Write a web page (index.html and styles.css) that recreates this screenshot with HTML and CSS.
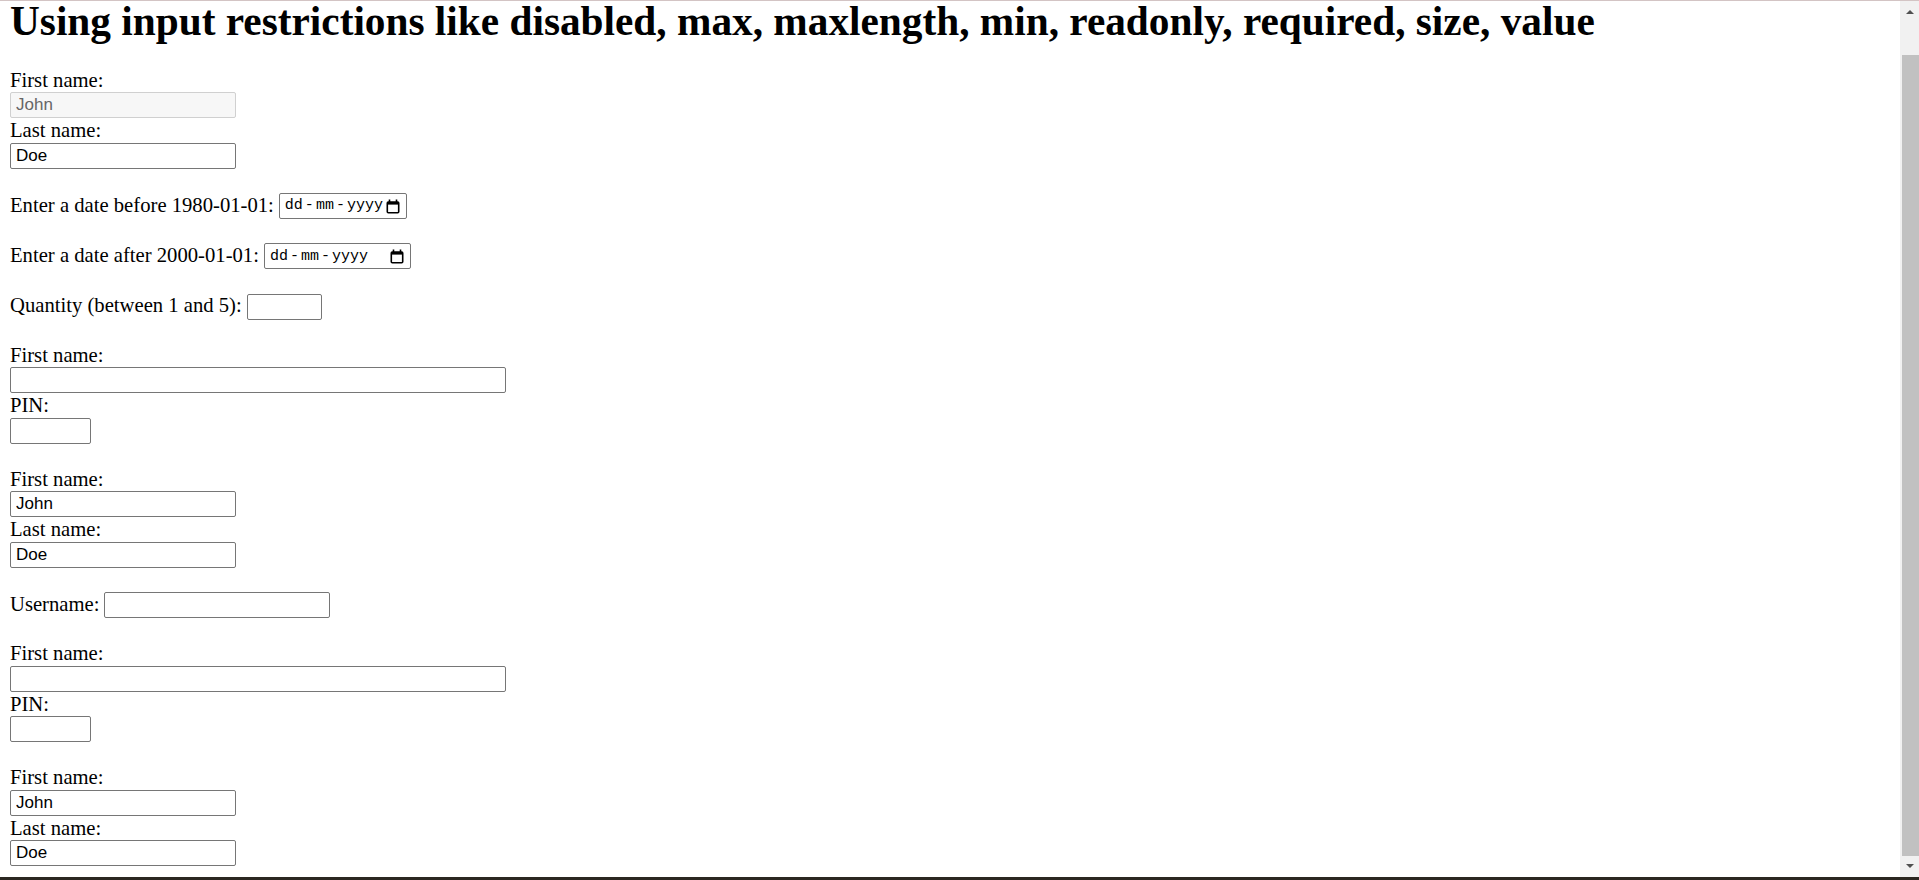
FILE: index.html
```html
<!DOCTYPE html>
<html lang="en">
<head>
<meta charset="utf-8">
<title>Input restrictions</title>
<link rel="stylesheet" href="styles.css">
</head>
<body>
<div class="window">
  <div class="viewport">
    <main class="page">
      <h1 class="title">Using input restrictions like disabled, max, maxlength, min, readonly, required, size, value</h1>

      <form class="group">
        <label class="label" for="d-first">First name:</label>
        <div class="field"><input class="input" id="d-first" type="text" value="John" disabled></div>
        <label class="label" for="d-last">Last name:</label>
        <div class="field"><input class="input" id="d-last" type="text" value="Doe"></div>
      </form>

      <form class="group">
        <div class="row">
          <label class="label">Enter a date before 1980-01-01:</label>
          <div class="date date-max">
            <span>dd</span><span class="sep">-</span><span>mm</span><span class="sep">-</span><span>yyyy</span>
            <svg class="cal" width="14" height="15" viewBox="0 0 14 15"><path d="M3.5 0.5v3M10.5 0.5v3" stroke="#000" stroke-width="1.6"/><rect x="1.3" y="3" width="11.4" height="10.7" rx="1" fill="none" stroke="#000" stroke-width="1.6"/><rect x="1.3" y="3" width="11.4" height="2.6" fill="#000"/></svg>
          </div>
        </div>
      </form>

      <form class="group">
        <div class="row">
          <label class="label">Enter a date after 2000-01-01:</label>
          <div class="date date-min">
            <span>dd</span><span class="sep">-</span><span>mm</span><span class="sep">-</span><span>yyyy</span>
            <svg class="cal" width="14" height="15" viewBox="0 0 14 15"><path d="M3.5 0.5v3M10.5 0.5v3" stroke="#000" stroke-width="1.6"/><rect x="1.3" y="3" width="11.4" height="10.7" rx="1" fill="none" stroke="#000" stroke-width="1.6"/><rect x="1.3" y="3" width="11.4" height="2.6" fill="#000"/></svg>
          </div>
        </div>
      </form>

      <form class="group">
        <div class="row">
          <label class="label" for="qty">Quantity (between 1 and 5):</label>
          <input class="input w-qty" id="qty" type="text">
        </div>
      </form>

      <form class="group">
        <label class="label" for="s-first">First name:</label>
        <div class="field"><input class="input w-long" id="s-first" type="text"></div>
        <label class="label" for="s-pin">PIN:</label>
        <div class="field"><input class="input w-pin" id="s-pin" type="text"></div>
      </form>

      <form class="group">
        <label class="label" for="r-first">First name:</label>
        <div class="field"><input class="input" id="r-first" type="text" value="John" readonly></div>
        <label class="label" for="r-last">Last name:</label>
        <div class="field"><input class="input" id="r-last" type="text" value="Doe"></div>
      </form>

      <form class="group">
        <div class="row">
          <label class="label" for="user">Username:</label>
          <input class="input" id="user" type="text">
        </div>
      </form>

      <form class="group">
        <label class="label" for="z-first">First name:</label>
        <div class="field"><input class="input w-long" id="z-first" type="text"></div>
        <label class="label" for="z-pin">PIN:</label>
        <div class="field"><input class="input w-pin" id="z-pin" type="text"></div>
      </form>

      <form class="group">
        <label class="label" for="v-first">First name:</label>
        <div class="field"><input class="input" id="v-first" type="text" value="John"></div>
        <label class="label" for="v-last">Last name:</label>
        <div class="field"><input class="input" id="v-last" type="text" value="Doe"></div>
      </form>
    </main>
    <div class="scrollbar">
      <div class="sb-btn sb-up"><span class="arrow-up"></span></div>
      <div class="sb-track"><div class="sb-thumb"></div></div>
      <div class="sb-btn sb-down"><span class="arrow-down"></span></div>
    </div>
  </div>
  <div class="bottombar"></div>
</div>
</body>
</html>
```

FILE: styles.css
```css
html, body {
  margin: 0;
  padding: 0;
  background: #ffffff;
  overflow: hidden;
}

.window {
  height: 880px;
  display: flex;
  flex-direction: column;
  border-top: 1px solid #d3c4c4;
  box-sizing: border-box;
}

.viewport {
  flex: 1;
  min-height: 0;
  display: flex;
}

.page {
  flex: 1;
  min-width: 0;
  overflow: hidden;
  padding-left: 10px;
  font-family: "Liberation Serif", "Times New Roman", serif;
  font-size: 20.66px;
  line-height: 23.2px;
  color: #000;
}

.title {
  margin: 0 0 26.5px;
  font-size: 41.3px;
  line-height: 41.5px;
  font-weight: bold;
  white-space: nowrap;
}

.group {
  margin: 0 0 23.15px;
  display: flex;
  flex-direction: column;
  align-items: flex-start;
}

.label {
  display: block;
  height: 23.25px;
  white-space: nowrap;
}

.field {
  height: 27.2px;
}

.row {
  display: flex;
  align-items: flex-start;
  gap: 5px;
  height: 27.2px;
}

.row .label {
  margin-top: 0.5px;
}

.input {
  display: block;
  box-sizing: border-box;
  width: 226px;
  height: 26px;
  margin: 0;
  padding: 0 5px;
  border: 1px solid #767676;
  border-radius: 2px;
  background: #fff;
  color: #000;
  font-family: "Liberation Sans", Arial, sans-serif;
  font-size: 17px;
  outline: none;
}

.input:disabled {
  background: #f7f7f7;
  border-color: #d0d0d0;
  color: #666;
  -webkit-text-fill-color: #666;
  opacity: 1;
}

.w-long { width: 496px; }
.w-pin { width: 81px; }
.w-qty { width: 75px; }

.date {
  box-sizing: border-box;
  height: 26px;
  display: flex;
  align-items: center;
  padding: 0 6px 0 5px;
  border: 1px solid #767676;
  border-radius: 2px;
  font-family: "Liberation Mono", "Courier New", monospace;
  font-size: 15px;
  color: #000;
}

.date-max { width: 128px; }
.date-min { width: 147px; }

.date .sep {
  margin: 0 2px;
}

.date .cal {
  margin-left: auto;
  flex: none;
}

.scrollbar {
  width: 19px;
  flex: none;
  background: #f1f1f1;
  display: flex;
  flex-direction: column;
}

.sb-btn {
  height: 18px;
  flex: none;
  display: flex;
  justify-content: center;
  box-sizing: border-box;
}

.sb-up {
  align-items: center;
  padding-top: 3px;
}

.sb-down {
  align-items: center;
  padding-bottom: 5px;
}

.arrow-up {
  width: 0;
  height: 0;
  border-left: 4px solid transparent;
  border-right: 4px solid transparent;
  border-bottom: 4px solid #505050;
}

.arrow-down {
  width: 0;
  height: 0;
  border-left: 4px solid transparent;
  border-right: 4px solid transparent;
  border-top: 4px solid #505050;
}

.sb-track {
  flex: 1;
  display: flex;
  padding: 36px 0 3px 2px;
}

.sb-thumb {
  flex: 1;
  background: #c1c1c1;
}

.bottombar {
  height: 3px;
  flex: none;
  background: #2b2721;
}
```
